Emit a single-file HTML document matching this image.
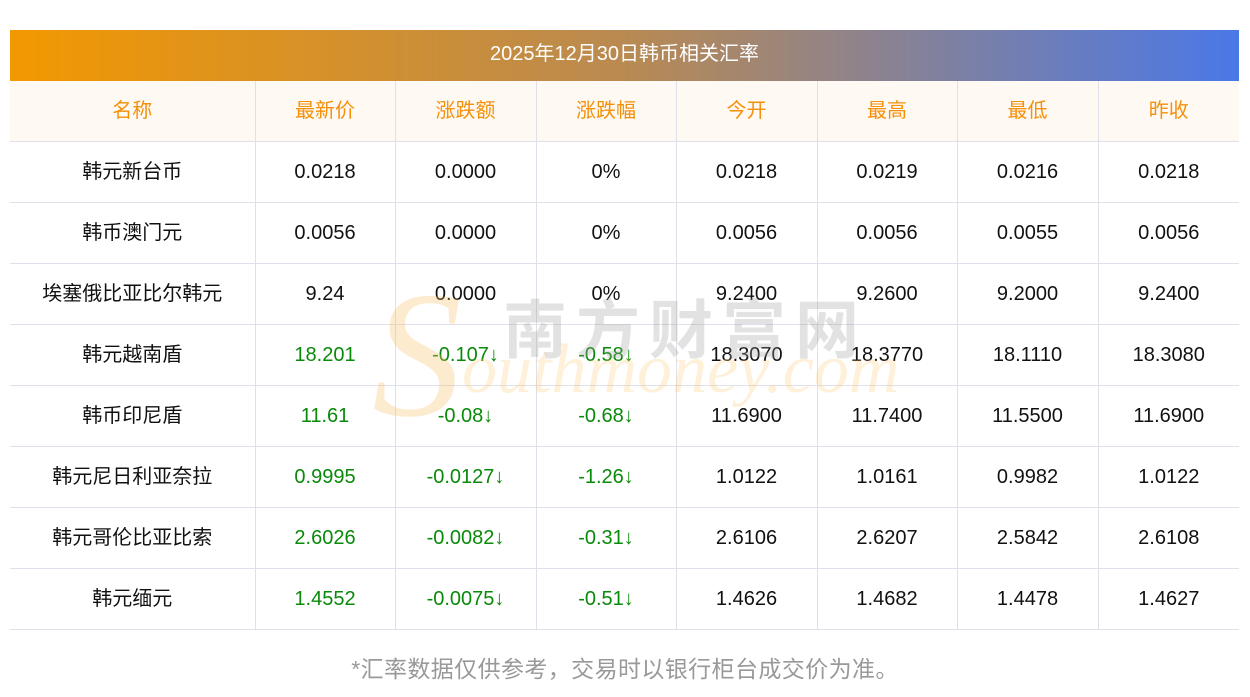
<!DOCTYPE html>
<html><head><meta charset="utf-8"><style>
body{margin:0;background:#fff;font-family:"Liberation Sans","Noto Sans CJK SC",sans-serif;width:1250px;height:697px;position:relative;overflow:hidden}
.title{position:absolute;left:10px;top:30px;width:1229px;height:51px;background:linear-gradient(90deg,#f39800,#b98a52 50%,#4a78e8);color:#fff;font-size:20px;line-height:49px;text-align:center}
table{position:absolute;left:10px;top:81px;border-collapse:collapse;width:1229px;table-layout:fixed}
td{height:60px;border:1px solid #dfe0ea;text-align:center;font-size:20px;color:#111;padding:0}
tr td:first-child{border-left:none}tr td:last-child{border-right:none}
tr:first-child td{border-top:none;color:#f5900a;background:#fff9f3;height:60px}
.c{position:relative;top:-3px}
.g{color:#0a8a0a}
.wm1{position:absolute;left:503px;top:280px;font-size:64px;color:rgba(160,160,160,.3);letter-spacing:9px;font-weight:bold;font-family:"Noto Sans CJK SC",sans-serif}
.wm2{position:absolute;left:462px;top:330px;font-size:70px;color:rgba(250,200,120,.28);font-style:italic;font-family:"Liberation Serif",serif}
.wmS{position:absolute;left:372px;top:265px;font-size:180px;color:rgba(248,190,100,.3);font-style:italic;font-family:"Liberation Serif",serif;line-height:1}
.note{position:absolute;top:650px;width:1250px;text-align:center;color:#999;font-size:23px;letter-spacing:0.4px}
</style></head><body>
<div class="title">2025年12月30日韩币相关汇率</div>
<table>
<colgroup><col style="width:245px"><col style="width:140px"><col style="width:141px"><col style="width:140px"><col style="width:141px"><col style="width:140px"><col style="width:141px"><col style="width:141px"></colgroup>
<tr><td><span class="c">名称</span></td><td><span class="c">最新价</span></td><td><span class="c">涨跌额</span></td><td><span class="c">涨跌幅</span></td><td><span class="c">今开</span></td><td><span class="c">最高</span></td><td><span class="c">最低</span></td><td><span class="c">昨收</span></td></tr>
<tr><td><span class="c">韩元新台币</span></td><td>0.0218</td><td>0.0000</td><td>0%</td><td>0.0218</td><td>0.0219</td><td>0.0216</td><td>0.0218</td></tr>
<tr><td><span class="c">韩币澳门元</span></td><td>0.0056</td><td>0.0000</td><td>0%</td><td>0.0056</td><td>0.0056</td><td>0.0055</td><td>0.0056</td></tr>
<tr><td><span class="c">埃塞俄比亚比尔韩元</span></td><td>9.24</td><td>0.0000</td><td>0%</td><td>9.2400</td><td>9.2600</td><td>9.2000</td><td>9.2400</td></tr>
<tr><td><span class="c">韩元越南盾</span></td><td class="g">18.201</td><td class="g">-0.107↓</td><td class="g">-0.58↓</td><td>18.3070</td><td>18.3770</td><td>18.1110</td><td>18.3080</td></tr>
<tr><td><span class="c">韩币印尼盾</span></td><td class="g">11.61</td><td class="g">-0.08↓</td><td class="g">-0.68↓</td><td>11.6900</td><td>11.7400</td><td>11.5500</td><td>11.6900</td></tr>
<tr><td><span class="c">韩元尼日利亚奈拉</span></td><td class="g">0.9995</td><td class="g">-0.0127↓</td><td class="g">-1.26↓</td><td>1.0122</td><td>1.0161</td><td>0.9982</td><td>1.0122</td></tr>
<tr><td><span class="c">韩元哥伦比亚比索</span></td><td class="g">2.6026</td><td class="g">-0.0082↓</td><td class="g">-0.31↓</td><td>2.6106</td><td>2.6207</td><td>2.5842</td><td>2.6108</td></tr>
<tr><td><span class="c">韩元缅元</span></td><td class="g">1.4552</td><td class="g">-0.0075↓</td><td class="g">-0.51↓</td><td>1.4626</td><td>1.4682</td><td>1.4478</td><td>1.4627</td></tr>
</table>
<div class="wmS">S</div>
<div class="wm1">南方财富网</div>
<div class="wm2">outhmoney.com</div>
<div class="note">*汇率数据仅供参考，交易时以银行柜台成交价为准。</div>
</body></html>
